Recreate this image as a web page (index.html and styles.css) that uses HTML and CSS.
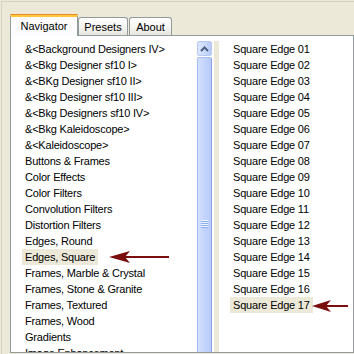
FILE: index.html
```html
<!DOCTYPE html>
<html>
<head>
<meta charset="utf-8">
<link rel="stylesheet" href="styles.css">
</head>
<body>
<div class="window">
  <div class="tabs">
    <div class="tab tab-active">Navigator</div>
    <div class="tab tab-presets">Presets</div>
    <div class="tab tab-about">About</div>
  </div>
  <div class="panel">
    <div class="listbox listbox-left">
      <ul class="list">
        <li>&amp;&lt;Background Designers IV&gt;</li>
        <li>&amp;&lt;Bkg Designer sf10 I&gt;</li>
        <li>&amp;&lt;BKg Designer sf10 II&gt;</li>
        <li>&amp;&lt;Bkg Designer sf10 III&gt;</li>
        <li>&amp;&lt;Bkg Designers sf10 IV&gt;</li>
        <li>&amp;&lt;Bkg Kaleidoscope&gt;</li>
        <li>&amp;&lt;Kaleidoscope&gt;</li>
        <li>Buttons &amp; Frames</li>
        <li>Color Effects</li>
        <li>Color Filters</li>
        <li>Convolution Filters</li>
        <li>Distortion Filters</li>
        <li>Edges, Round</li>
        <li class="selected">Edges, Square</li>
        <li>Frames, Marble &amp; Crystal</li>
        <li>Frames, Stone &amp; Granite</li>
        <li>Frames, Textured</li>
        <li>Frames, Wood</li>
        <li>Gradients</li>
        <li>Image Enhancement</li>
      </ul>
      <div class="scrollbar">
        <div class="btn-up">
          <svg width="9" height="6" viewBox="0 0 9 6"><path d="M1 5 L4.5 1.5 L8 5" fill="none" stroke="#4D6185" stroke-width="2"/></svg>
        </div>
        <div class="thumb">
          <div class="grip"><span></span><span></span><span></span><span></span></div>
        </div>
      </div>
    </div>
    <div class="splitter"></div>
    <div class="listbox listbox-right">
      <ul class="list">
        <li>Square Edge 01</li>
        <li>Square Edge 02</li>
        <li>Square Edge 03</li>
        <li>Square Edge 04</li>
        <li>Square Edge 05</li>
        <li>Square Edge 06</li>
        <li>Square Edge 07</li>
        <li>Square Edge 08</li>
        <li>Square Edge 09</li>
        <li>Square Edge 10</li>
        <li>Square Edge 11</li>
        <li>Square Edge 12</li>
        <li>Square Edge 13</li>
        <li>Square Edge 14</li>
        <li>Square Edge 15</li>
        <li>Square Edge 16</li>
        <li class="selected">Square Edge 17</li>
      </ul>
    </div>
  </div>
  <svg class="arrows" width="354" height="354" viewBox="0 0 354 354">
    <g fill="#7A0E0E" stroke="none">
      <rect x="122" y="256" width="46" height="2"/>
      <path d="M108 257 L129 251 L124 257 L129 263 Z"/>
      <rect x="322" y="305" width="25" height="2"/>
      <path d="M311 306 L330 300 L325 306 L330 312 Z"/>
    </g>
  </svg>
</div>
</body>
</html>
```

FILE: styles.css
```css
html, body {
  margin: 0;
  padding: 0;
}

body {
  width: 354px;
  height: 354px;
  overflow: hidden;
  background: #ECE9D8;
  font-family: "Liberation Sans", Arial, sans-serif;
  font-size: 11px;
  color: #000;
}

.window {
  position: relative;
  width: 354px;
  height: 354px;
  box-sizing: border-box;
  padding: 14px 0 0 10px;
  background: #ECE9D8;
  border-top: 1px solid #D6D2C2;
  border-left: 1px solid #D6D2C2;
  margin: 1px 0 0 1px;
}

.window {
  padding-top: 12px;
  padding-left: 8px;
}

.tabs {
  display: flex;
  align-items: flex-end;
  height: 21px;
  position: relative;
  z-index: 2;
}

.tab {
  box-sizing: border-box;
  height: 18px;
  border: 1px solid #919B9C;
  border-bottom: none;
  border-radius: 3px 3px 0 0;
  background: linear-gradient(#FFFFFF, #F3F3EF 60%, #E6E5DE);
  display: flex;
  align-items: center;
  justify-content: center;
  padding-top: 1px;
}

.tab-active {
  height: 22px;
  width: 68px;
  margin-bottom: -1px;
  background: #FCFCFE;
  border-top: 3px solid #FFC83C;
  box-shadow: inset 0 0 0 0 transparent;
  position: relative;
  padding-top: 0;
  padding-bottom: 1px;
}

.tab-active::before {
  content: "";
  position: absolute;
  left: -1px;
  right: -1px;
  top: -3px;
  height: 1px;
  background: #E68B2C;
  border-radius: 3px 3px 0 0;
}

.tab-presets {
  width: 50px;
}

.tab-about {
  width: 43px;
  margin-left: 1px;
}

.panel {
  box-sizing: border-box;
  width: 344px;
  height: 318px;
  border: 1px solid #919B9C;
  background: #FFFFFF;
  padding-top: 5px;
  display: flex;
  position: relative;
  z-index: 1;
}

.listbox {
  height: 311px;
  overflow: hidden;
  display: flex;
}

.listbox-left {
  width: 202px;
}

.listbox-right {
  flex: 1;
}

.list {
  list-style: none;
  margin: 0;
  padding: 0 0 0 11px;
  flex: 1;
  overflow: hidden;
}

.list li {
  height: 16px;
  line-height: 16px;
  padding: 0 3px;
  white-space: nowrap;
  width: max-content;
  letter-spacing: -0.2px;
}

.list li.selected {
  background: #ECE9D8;
}

.scrollbar {
  width: 17px;
  box-sizing: border-box;
  padding: 0 1px;
  background: #FDFDFB;
  display: flex;
  flex-direction: column;
  gap: 1px;
}

.btn-up {
  box-sizing: border-box;
  height: 15px;
  border: 1px solid #B7C9F4;
  border-radius: 2px;
  background: linear-gradient(90deg, #DDE6FD, #C9D8FC 60%, #B6C9F6);
  display: flex;
  align-items: center;
  justify-content: center;
  flex: none;
}

.thumb {
  box-sizing: border-box;
  height: 340px;
  flex: none;
  border: 1px solid #A9BFF3;
  border-right-color: #8DA7E6;
  border-radius: 2px;
  background: linear-gradient(90deg, #D3E0FD, #C3D4FC 50%, #B7CAF8);
  display: flex;
  flex-direction: column;
  align-items: center;
}

.grip {
  margin-top: 162px;
  display: flex;
  flex-direction: column;
  gap: 0;
}

.grip span {
  display: block;
  width: 7px;
  height: 1px;
  background: #EEF4FE;
  border-bottom: 1px solid #8CB0F8;
}

.splitter {
  width: 6px;
  height: 311px;
  background: #ECE9D8;
  border-left: 1px solid #FFFFFF;
  box-sizing: border-box;
}

.arrows {
  position: absolute;
  left: -1px;
  top: -2px;
  pointer-events: none;
  z-index: 3;
}
```
